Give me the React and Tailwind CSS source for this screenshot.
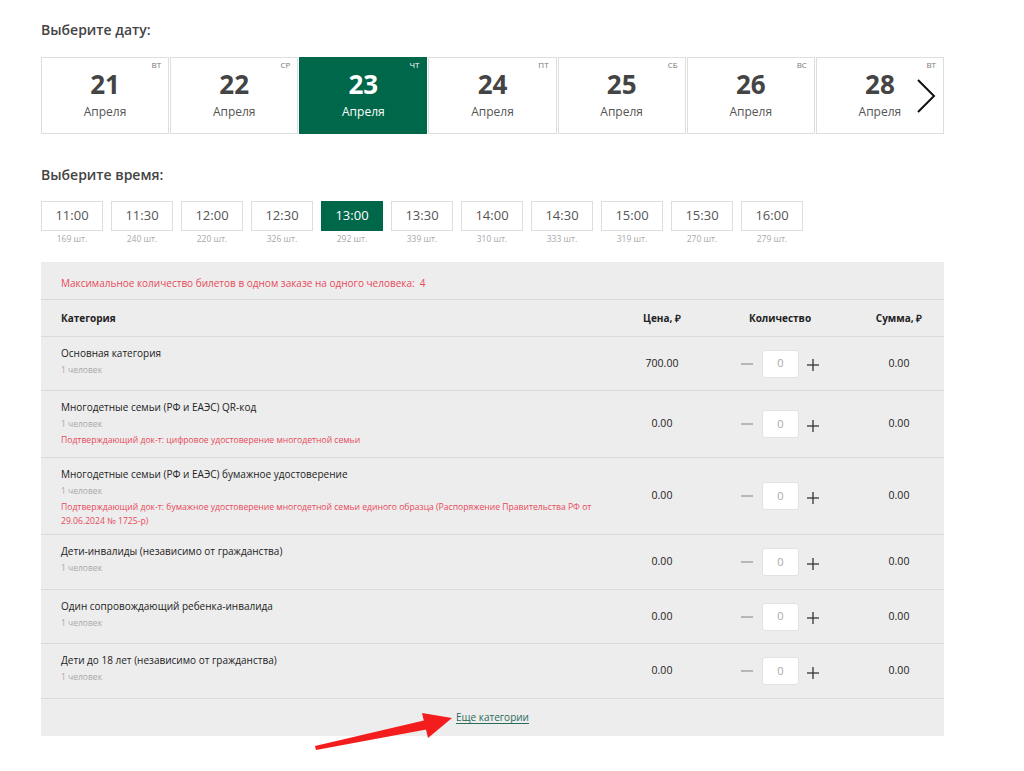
import React from "react";

const dates = [
  { day: "21", dow: "ВТ" },
  { day: "22", dow: "СР" },
  { day: "23", dow: "ЧТ", active: true },
  { day: "24", dow: "ПТ" },
  { day: "25", dow: "СБ" },
  { day: "26", dow: "ВС" },
  { day: "28", dow: "ВТ" },
];

const times = [
  { t: "11:00", n: 169 },
  { t: "11:30", n: 240 },
  { t: "12:00", n: 220 },
  { t: "12:30", n: 326 },
  { t: "13:00", n: 292, active: true },
  { t: "13:30", n: 339 },
  { t: "14:00", n: 310 },
  { t: "14:30", n: 333 },
  { t: "15:00", n: 319 },
  { t: "15:30", n: 270 },
  { t: "16:00", n: 279 },
];

const rows = [
  { title: "Основная категория", price: "700.00", h: "h-[54px]" },
  {
    title: "Многодетные семьи (РФ и ЕАЭС) QR-код",
    price: "0.00",
    note: ["Подтверждающий док-т: цифровое удостоверение многодетной семьи"],
    h: "h-[67px]",
  },
  {
    title: "Многодетные семьи (РФ и ЕАЭС) бумажное удостоверение",
    price: "0.00",
    note: [
      "Подтверждающий док-т: бумажное удостоверение многодетной семьи единого образца (Распоряжение Правительства РФ от",
      "29.06.2024 № 1725-р)",
    ],
    h: "h-[77px]",
  },
  { title: "Дети-инвалиды (независимо от гражданства)", price: "0.00", h: "h-[55px]" },
  { title: "Один сопровождающий ребенка-инвалида", price: "0.00", h: "h-[54px]" },
  { title: "Дети до 18 лет (независимо от гражданства)", price: "0.00", h: "h-[55px]" },
];

function Counter() {
  return (
    <div className="flex items-center justify-center">
      <svg width="12" height="12" viewBox="0 0 12 12" className="mr-[9px]">
        <line x1="0" y1="6" x2="12" y2="6" stroke="#9a9a9a" strokeWidth="1.3" />
      </svg>
      <div className="flex h-[28px] w-[37px] items-center justify-center rounded-[3px] border border-[#e2e2e2] bg-white text-[11px] text-[#a8a8a8]">
        0
      </div>
      <svg width="12" height="12" viewBox="0 0 12 12" className="ml-[8px] mt-[3px]">
        <line x1="0" y1="6" x2="12" y2="6" stroke="#333" strokeWidth="1.3" />
        <line x1="6" y1="0" x2="6" y2="12" stroke="#333" strokeWidth="1.3" />
      </svg>
    </div>
  );
}

export default function App() {
  return (
    <div className="relative min-h-screen bg-white font-['Open_Sans',sans-serif] text-[#333]">
      <div className="ml-[41px] w-[903px] pt-[20px]">
        <h2 className="text-[14px] font-semibold leading-[20px] text-[#444]">Выберите дату:</h2>

        <div className="relative mt-[17px] grid grid-cols-7 gap-px">
          {dates.map((d) => (
            <div
              key={d.day}
              className={
                d.active
                  ? "relative flex h-[77px] flex-col items-center border border-[#00684a] bg-[#00684a] pt-[9px] text-white"
                  : "relative flex h-[77px] flex-col items-center border border-[#dedede] bg-white pt-[9px] text-[#444]"
              }
            >
              <span
                className={
                  d.active
                    ? "absolute right-[7px] top-[1px] text-[8px] text-white"
                    : "absolute right-[7px] top-[1px] text-[8px] text-[#777]"
                }
              >
                {d.dow}
              </span>
              <span className="text-[26px] font-bold leading-[34px]">{d.day}</span>
              <span className={d.active ? "mt-[3px] text-[12px] leading-[16px] text-white" : "mt-[3px] text-[12px] leading-[16px] text-[#555]"}>
                Апреля
              </span>
            </div>
          ))}
          <svg
            className="absolute right-[8px] top-[21px]"
            width="20"
            height="36"
            viewBox="0 0 20 36"
          >
            <polyline points="2,2 18,18 2,34" fill="none" stroke="#111" strokeWidth="2" />
          </svg>
        </div>

        <h2 className="mt-[31px] text-[14px] font-semibold leading-[20px] text-[#444]">Выберите время:</h2>

        <div className="mt-[16px] flex gap-[8px]">
          {times.map((s) => (
            <div key={s.t} className="flex w-[62px] flex-col items-center">
              <div
                className={
                  s.active
                    ? "flex h-[30px] w-[62px] items-center justify-center border border-[#00684a] bg-[#00684a] text-[13px] text-white"
                    : "flex h-[30px] w-[62px] items-center justify-center border border-[#dedede] bg-white text-[13px] text-[#555]"
                }
              >
                {s.t}
              </div>
              <span className="mt-[2px] text-[8.5px] leading-[12px] text-[#a8a8a8]">{s.n} шт.</span>
            </div>
          ))}
        </div>

        <div className="mt-[17px] bg-[#ededed]">
          <div className="h-[37px] pl-[20px] pt-[14px] text-[10px] leading-[14px] text-[#e8495a]">
            Максимальное количество билетов в одном заказе на одного человека:&nbsp; 4
          </div>

          <div className="grid h-[37px] grid-cols-[minmax(0,1fr)_100px_136px_96px] items-center border-t border-[#dadada] pl-[20px] text-[10px] font-bold text-[#222]">
            <span>Категория</span>
            <span className="text-center">Цена, ₽</span>
            <span className="text-center">Количество</span>
            <span className="pl-[6px] text-center">Сумма, ₽</span>
          </div>

          {rows.map((r) => (
            <div
              key={r.title}
              className={`grid ${r.h} grid-cols-[minmax(0,1fr)_100px_136px_96px] border-t border-[#dadada] pl-[20px]`}
            >
              <div className="pt-[8px]">
                <div className="text-[10px] leading-[16px] text-[#222]">{r.title}</div>
                <div className="mt-[3px] text-[8.5px] leading-[12px] text-[#a8a8a8]">1 человек</div>
                {r.note && (
                  <div className="mt-[3px] text-[8.6px] leading-[14px] text-[#e8495a]">
                    {r.note.map((line, i) => (
                      <div key={i} className="whitespace-nowrap">{line}</div>
                    ))}
                  </div>
                )}
              </div>
              <div className="flex items-center justify-center text-[10.5px] text-[#222]">{r.price}</div>
              <div className="flex items-center justify-center">
                <Counter />
              </div>
              <div className="flex items-center justify-center pl-[6px] text-[10.5px] text-[#222]">0.00</div>
            </div>
          ))}

          <div className="flex h-[38px] items-center justify-center border-t border-[#dadada]">
            <a href="#" className="text-[10px] text-[#2a6b5c] underline underline-offset-2">
              Еще категории
            </a>
          </div>
        </div>
      </div>

      <svg
        className="pointer-events-none absolute left-0 top-0"
        width="1024"
        height="771"
        viewBox="0 0 1024 771"
      >
        <polygon points="315,746 426,720 429,729 316,750" fill="#f41d1d" />
        <polygon points="422,713 452,718 428,738" fill="#f41d1d" />
      </svg>
    </div>
  );
}
